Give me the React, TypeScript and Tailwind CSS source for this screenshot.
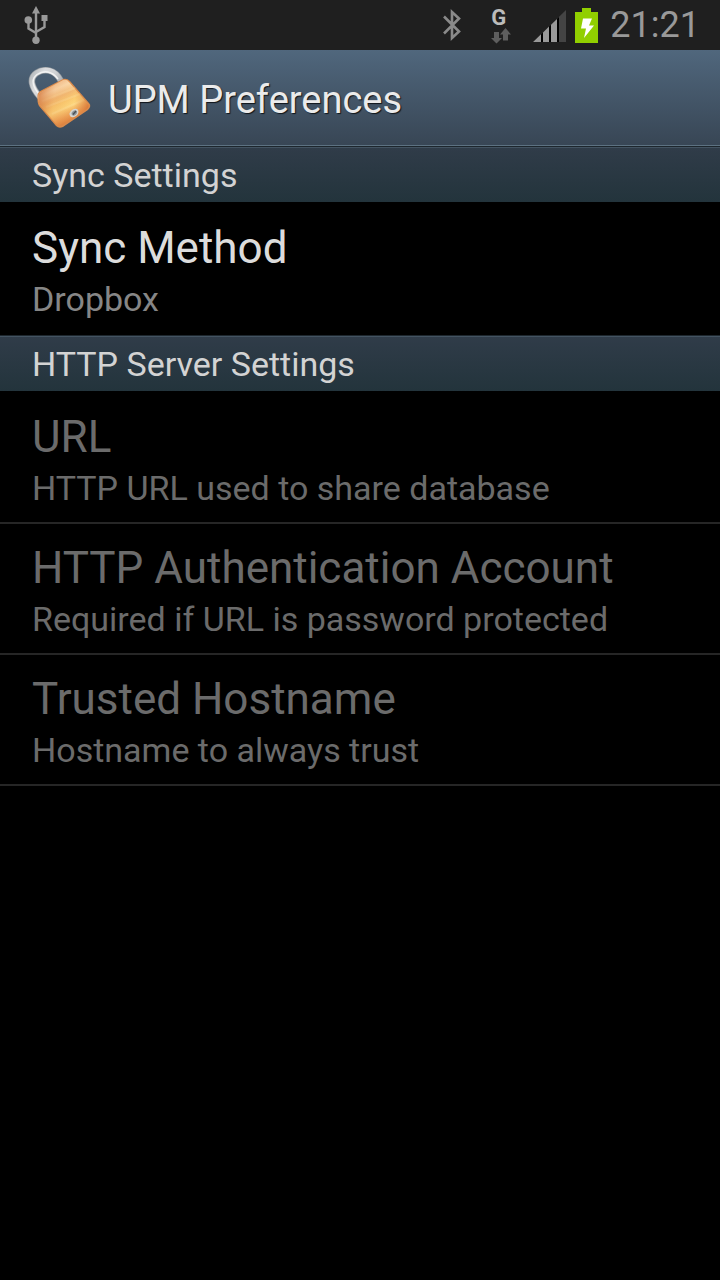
import React from "react";

function UsbIcon() {
  return (
    <svg width="24" height="38" viewBox="0 0 24 38" role="img" aria-label="USB connected" fill="#999999">
      <path d="M12 0 16 7.500H8Z" />
      <path d="M12 6V34M4.500 14V22.500L12 27M20.500 11V21L12 26" fill="none" stroke="#999999" strokeWidth="2.400" />
      <circle cx="4.300" cy="14" r="3.800" />
      <rect x="17.500" y="9" width="6" height="6" />
      <circle cx="12" cy="34.300" r="3.700" />
    </svg>
  );
}

function BluetoothIcon() {
  return (
    <svg width="18" height="32" viewBox="0 0 18 32" role="img" aria-label="Bluetooth" fill="none" stroke="#8a8a8a" strokeWidth="2.600">
      <path d="M1 7.500 16 22.500 9 29V3L16 9.500 1 24.500" />
    </svg>
  );
}

function DataArrows() {
  return (
    <svg width="20" height="16" viewBox="0 0 20 16" aria-hidden="true" fill="#5e5e5e">
      <path d="M3 4H8V10H11L5.500 15.500 0 10H3Z" />
      <path d="M14.500 0 20 6.500H17V12.500H12V6.500H9Z" />
    </svg>
  );
}

function SignalIcon() {
  return (
    <svg width="34" height="32" viewBox="0 0 34 32" role="img" aria-label="Signal strength">
      <path d="M0 32 33 0V32Z" fill="#444444" />
      <path d="M0 32 26 7V32Z" fill="#000000" />
      <path d="M0 32 8 24.300V32ZM10 22.400 16 16.600V32H10ZM18 14.700 24 8.900V32H18Z" fill="#999999" />
    </svg>
  );
}

function BatteryIcon() {
  return (
    <svg width="23" height="35" viewBox="0 0 23 35" role="img" aria-label="Battery charging">
      <path d="M7 0H16V4H23V35H0V4H7Z" fill="#91cf00" />
      <path d="M8 10.500H17L14 17.500H19L9 30 11 20.500H6Z" fill="#ffffff" />
    </svg>
  );
}

function PadlockIcon() {
  return (
    <svg width="64" height="64" viewBox="0 0 64 64" aria-hidden="true">
      <defs>
        <linearGradient id="body" x1="0.250" y1="0.050" x2="0.700" y2="0.950">
          <stop offset="0" stopColor="#f3bd8b" />
          <stop offset="0.180" stopColor="#fbdcb0" />
          <stop offset="0.360" stopColor="#f3bb74" />
          <stop offset="0.500" stopColor="#fbcb70" />
          <stop offset="0.620" stopColor="#fdd67c" />
          <stop offset="0.800" stopColor="#eda055" />
          <stop offset="1" stopColor="#d4702f" />
        </linearGradient>
        <linearGradient id="shade" x1="0" y1="0.500" x2="1" y2="0.600">
          <stop offset="0" stopColor="#cf6f35" stopOpacity="0.700" />
          <stop offset="0.300" stopColor="#e08b4a" stopOpacity="0.200" />
          <stop offset="0.700" stopColor="#e08b4a" stopOpacity="0" />
          <stop offset="1" stopColor="#d2692c" stopOpacity="0.700" />
        </linearGradient>
        <linearGradient id="steel" x1="0" y1="0" x2="1" y2="0.500">
          <stop offset="0" stopColor="#b4b8bb" />
          <stop offset="0.350" stopColor="#dcdddf" />
          <stop offset="0.700" stopColor="#d0d2d4" />
          <stop offset="1" stopColor="#a9adb1" />
        </linearGradient>
      </defs>
      <path d="M12 30C3 20 1 11 8.500 6C16 1 27 2 33 14" fill="none" stroke="#8d949a" strokeWidth="6.500" />
      <path d="M12 30C3 20 1 11 8.500 6C16 1 27 2 33 14" fill="none" stroke="url(#steel)" strokeWidth="5.200" />
      <path d="M10 26C4 18 3 12 9 7.500C16 3 24 4 30 12" fill="none" stroke="#f3f3f3" strokeWidth="1.400" />
      <path d="M9.500 28Q10 25 14 23L35 12Q39 11 42 14L61 36Q64 39 60 43L35 60Q31 62 28 59L11 39Q9 36 9.500 28Z" fill="#d98a4b" />
      <path d="M10.500 28Q11 26 15 24L35 13Q39 12 41 15L60 37Q62 39 59 42L35 58Q31 60 28 57L12 38Q10 35 10.500 28Z" fill="url(#body)" />
      <path d="M14 34 47 21M18 40 52 27M24 47 56 33" stroke="#ffe7ae" strokeOpacity="0.250" strokeWidth="2" />
      <path d="M10.500 28Q11 26 15 24L35 13Q39 12 41 15L60 37Q62 39 59 42L35 58Q31 60 28 57L12 38Q10 35 10.500 28Z" fill="url(#shade)" />
      <ellipse cx="46" cy="46" rx="5" ry="3.600" transform="rotate(-40 46 46)" fill="#d5d5d2" />
      <ellipse cx="46.300" cy="46" rx="3" ry="2.200" transform="rotate(-40 46.300 46)" fill="#92979a" />
      <path d="M45 47.500 48 44" stroke="#4b5157" strokeWidth="1.400" />
    </svg>
  );
}

function StatusBar() {
  return (
    <div className="flex h-[50px] items-center bg-[#1f1f1f] pr-5 pl-6">
      <UsbIcon />
      <div className="ml-auto flex items-center">
        <BluetoothIcon />
        <div className="ml-[30px] flex w-5 flex-col pt-0.5">
          <span className="text-[22px] leading-5 font-bold text-[#bbbbbb]">G</span>
          <DataArrows />
        </div>
        <div className="ml-[22px] pt-0.5">
          <SignalIcon />
        </div>
        <div className="ml-2">
          <BatteryIcon />
        </div>
        <time className="ml-3 text-[36px] leading-[50px] text-[#999999]">21:21</time>
      </div>
    </div>
  );
}

function SectionHeader({ children }: { children: React.ReactNode }) {
  return (
    <h2 className="mb-0.5 h-14 border-t border-[#1d262d] bg-linear-to-b from-[#303c49] to-[#23343c] pl-8 text-[34px] leading-[56px] text-[#d3d3d3] shadow-[inset_0_1px_0_#435361]">
      {children}
    </h2>
  );
}

interface PreferenceProps {
  title: string;
  summary: string;
  disabled?: boolean;
  last?: boolean;
}

function Preference({ title, summary, disabled = false, last = false }: PreferenceProps) {
  return (
    <li className={last ? "border-b-2 border-black" : "border-b-2 border-[#262626]"}>
      <button
        type="button"
        disabled={disabled}
        className="block w-full pt-[18px] pr-4 pb-[9px] pl-8 text-left text-[#dcdcdc] disabled:text-[#6b6b6b]"
      >
        <span className="block text-[44px] leading-[52px]">{title}</span>
        <span className={disabled ? "block text-[34px] leading-[50px]" : "block text-[34px] leading-[50px] text-[#868686]"}>
          {summary}
        </span>
      </button>
    </li>
  );
}

export default function App() {
  return (
    <div className="min-h-screen bg-black font-[Roboto,sans-serif]">
      <StatusBar />
      <header className="flex h-24 items-center border-b border-[#5d7282] bg-linear-to-b from-[#50677d] to-[#384655] pl-7">
        <div className="pt-0.5">
          <PadlockIcon />
        </div>
        <h1 className="ml-4 pt-1 text-[38px] leading-[46px] text-[#ebebeb] [text-shadow:1px_1px_1px_#10151a]">
          UPM Preferences
        </h1>
      </header>
      <main>
        <section>
          <SectionHeader>Sync Settings</SectionHeader>
          <ul>
            <Preference title="Sync Method" summary="Dropbox" last />
          </ul>
        </section>
        <section>
          <SectionHeader>HTTP Server Settings</SectionHeader>
          <ul>
            <Preference title="URL" summary="HTTP URL used to share database" disabled />
            <Preference title="HTTP Authentication Account" summary="Required if URL is password protected" disabled />
            <Preference title="Trusted Hostname" summary="Hostname to always trust" disabled />
          </ul>
        </section>
      </main>
    </div>
  );
}
